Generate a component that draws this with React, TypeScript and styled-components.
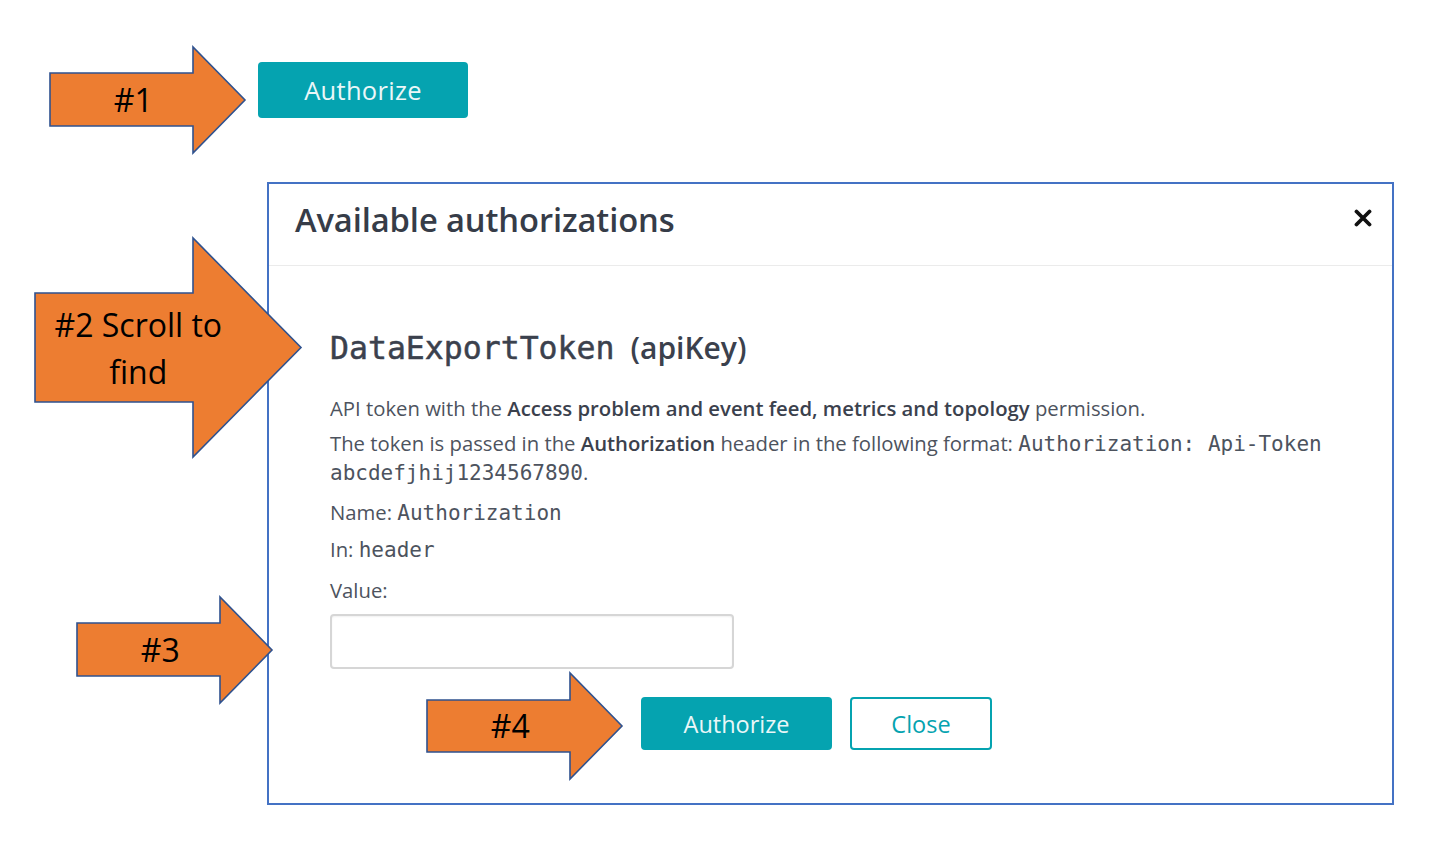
import styled, { createGlobalStyle } from "styled-components";

const teal = "#05a3b0";
const sans = `"Open Sans", "Noto Sans", Arial, sans-serif`;
const mono = `"DejaVu Sans Mono", "Liberation Mono", monospace`;

const GlobalStyle = createGlobalStyle`
  html, body {
    margin: 0;
    padding: 0;
    background: #ffffff;
  }
  * {
    box-sizing: border-box;
  }
`;

const Page = styled.div`
  position: relative;
  width: 1439px;
  height: 868px;
  overflow: hidden;
  padding-top: 62px;
  font-family: ${sans};
`;

const TopButton = styled.button`
  display: block;
  margin-left: 258px;
  width: 210px;
  height: 56px;
  border: none;
  border-radius: 4px;
  background: ${teal};
  color: #eaf7f8;
  font-family: ${sans};
  font-size: 25.5px;
  letter-spacing: 0.3px;
  cursor: pointer;
`;

const Dialog = styled.section`
  margin: 64px 0 0 267px;
  width: 1127px;
  border: 2px solid #4472c4;
  background: #ffffff;
`;

const Header = styled.header`
  height: 82px;
  display: flex;
  align-items: center;
  justify-content: space-between;
  padding: 0 20px 10px 26px;
  border-bottom: 1px solid #ebebeb;
`;

const Title = styled.h2`
  margin: 0;
  font-size: 32.7px;
  font-weight: 600;
  color: #363c48;
  letter-spacing: -0.1px;
`;

const CloseIcon = styled.button`
  display: flex;
  border: none;
  background: none;
  padding: 0;
  margin-top: -4px;
  cursor: pointer;
`;

const Body = styled.div`
  padding: 62px 60px 53px 61px;
  color: #4d535e;
`;

const SchemeName = styled.h3`
  margin: 0 0 26px;
  height: 40px;
  line-height: 40px;
  font-size: 30px;
  font-weight: 600;
  color: #3b414d;
  white-space: nowrap;
`;

const SchemeMono = styled.span`
  font-family: ${mono};
  font-size: 31.5px;
  font-weight: 400;
  margin-right: 16px;
  -webkit-text-stroke: 0.5px #3b414d;
`;

const Line = styled.p<{ $gap?: number }>`
  margin: ${(p) => p.$gap ?? 0}px 0 0;
  font-size: 20.3px;
  line-height: 29px;
`;

const Strong = styled.b`
  font-weight: 600;
  color: #3b414d;
`;

const Code = styled.code`
  font-family: ${mono};
  font-size: 21px;
  line-height: 1;
  color: #4d535e;
`;

const Input = styled.input`
  display: block;
  margin-top: 9px;
  width: 404px;
  height: 55px;
  border: 2px solid #d6d6d6;
  border-radius: 4px;
  box-shadow: inset 0 1px 2px rgba(0, 0, 0, 0.06);
  outline: none;
`;

const ButtonRow = styled.div`
  display: flex;
  gap: 18px;
  margin-top: 28px;
  padding-left: 311px;
`;

const ActionButton = styled.button<{ $outline?: boolean }>`
  height: 53px;
  width: ${(p) => (p.$outline ? 142 : 191)}px;
  border-radius: 4px;
  border: 2px solid ${teal};
  background: ${(p) => (p.$outline ? "#ffffff" : teal)};
  color: ${(p) => (p.$outline ? teal : "#eaf7f8")};
  font-family: ${sans};
  font-size: 23.5px;
  cursor: pointer;
`;

/* annotation arrows drawn on top of the screenshot */
const ArrowWrap = styled.div<{ $left: number; $top: number; $w: number; $h: number }>`
  position: absolute;
  left: ${(p) => p.$left}px;
  top: ${(p) => p.$top}px;
  width: ${(p) => p.$w}px;
  height: ${(p) => p.$h}px;
  pointer-events: none;

  svg {
    position: absolute;
    inset: 0;
    overflow: visible;
  }
`;

const ArrowLabel = styled.div<{ $top: number; $w: number; $h: number; $lh: number }>`
  position: absolute;
  left: 0;
  top: ${(p) => p.$top}px;
  width: ${(p) => p.$w}px;
  height: ${(p) => p.$h}px;
  display: flex;
  align-items: center;
  justify-content: center;
  text-align: center;
  font-family: ${sans};
  font-size: 32px;
  line-height: ${(p) => p.$lh}px;
  color: #000000;
`;

type ArrowProps = {
  left: number;
  top: number;
  w: number;
  h: number;
  bodyTop: number;
  bodyH: number;
  bodyW: number;
  lineHeight?: number;
  children: React.ReactNode;
};

const Arrow = ({ left, top, w, h, bodyTop, bodyH, bodyW, lineHeight = 40, children }: ArrowProps) => {
  const pts = [
    [0, bodyTop],
    [bodyW, bodyTop],
    [bodyW, 0],
    [w, h / 2],
    [bodyW, h],
    [bodyW, bodyTop + bodyH],
    [0, bodyTop + bodyH],
  ]
    .map((p) => p.join(","))
    .join(" ");
  const labelW = bodyW + (w - bodyW) * 0.45;
  return (
    <ArrowWrap $left={left} $top={top} $w={w} $h={h}>
      <svg width={w} height={h} viewBox={`0 0 ${w} ${h}`}>
        <polygon points={pts} fill="#ed7d31" stroke="#2f528f" strokeWidth="1.6" strokeLinejoin="miter" />
      </svg>
      <ArrowLabel $top={bodyTop} $w={labelW} $h={bodyH} $lh={lineHeight}>
        {children}
      </ArrowLabel>
    </ArrowWrap>
  );
};

const App = () => {
  return (
    <Page>
      <GlobalStyle />
      <TopButton>Authorize</TopButton>

      <Dialog>
        <Header>
          <Title>Available authorizations</Title>
          <CloseIcon aria-label="Close">
            <svg width="18" height="18" viewBox="0 0 18 18">
              <path d="M2.5 2.5 L15.5 15.5 M15.5 2.5 L2.5 15.5" stroke="#111" strokeWidth="3.8" strokeLinecap="round" />
            </svg>
          </CloseIcon>
        </Header>

        <Body>
          <SchemeName>
            <SchemeMono>DataExportToken</SchemeMono>(apiKey)
          </SchemeName>
          <Line>
            API token with the <Strong>Access problem and event feed, metrics and topology</Strong> permission.
          </Line>
          <Line $gap={6}>
            The token is passed in the <Strong>Authorization</Strong> header in the following format:{" "}
            <Code>Authorization: Api-Token abcdefjhij1234567890</Code>.
          </Line>
          <Line $gap={11}>
            Name: <Code>Authorization</Code>
          </Line>
          <Line $gap={8}>
            In: <Code>header</Code>
          </Line>
          <Line $gap={12}>Value:</Line>
          <Input type="text" />
          <ButtonRow>
            <ActionButton>Authorize</ActionButton>
            <ActionButton $outline>Close</ActionButton>
          </ButtonRow>
        </Body>
      </Dialog>

      <Arrow left={50} top={47} w={195} h={106} bodyTop={26} bodyH={53} bodyW={143}>
        #1
      </Arrow>
      <Arrow left={35} top={238} w={266} h={219} bodyTop={55} bodyH={109} bodyW={158} lineHeight={47}>
        #2 Scroll to
        <br />
        find
      </Arrow>
      <Arrow left={77} top={597} w={195} h={106} bodyTop={26} bodyH={53} bodyW={143}>
        #3
      </Arrow>
      <Arrow left={427} top={673} w={195} h={106} bodyTop={27} bodyH={52} bodyW={143}>
        #4
      </Arrow>
    </Page>
  );
};

export default App;
